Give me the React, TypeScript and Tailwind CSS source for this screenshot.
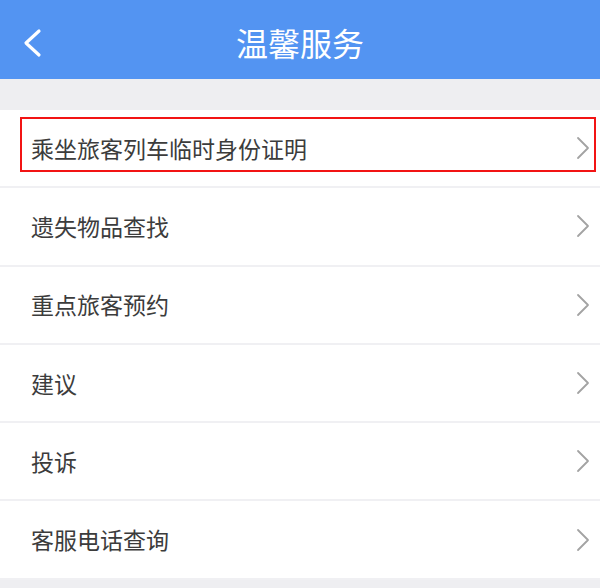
const items = [
  "乘坐旅客列车临时身份证明",
  "遗失物品查找",
  "重点旅客预约",
  "建议",
  "投诉",
  "客服电话查询",
];

function Chevron() {
  return (
    <svg width="14" height="24" viewBox="0 0 14 24" fill="none">
      <path d="M2 2 L12 12 L2 22" stroke="#a3a3a3" strokeWidth="1.8" strokeLinecap="round" strokeLinejoin="round" />
    </svg>
  );
}

export default function App() {
  return (
    <div
      className="w-[600px] h-[588px] bg-[#eeeef1] overflow-hidden"
      style={{ fontFamily: '"Noto Sans CJK SC", "Noto Sans", sans-serif' }}
    >
      <header className="relative h-[79px] bg-[#5394f2] flex items-center justify-center pt-1">
        <button className="absolute left-[20px] top-[28px] text-white">
          <svg width="24" height="30" viewBox="0 0 24 30" fill="none">
            <path d="M19 3 L6 15 L19 27" stroke="white" strokeWidth="3.2" strokeLinecap="round" strokeLinejoin="round" />
          </svg>
        </button>
        <h1 className="text-[32px] leading-none text-white">温馨服务</h1>
      </header>
      <div className="h-[31px]" />
      <ul className="bg-white">
        {items.map((label, i) => (
          <li
            key={label}
            className="relative h-[78.3px] flex items-center justify-between pl-[31px] pr-[10px] border-b-2 border-[#f0f0f3]"
          >
            <span className="text-[23px] text-[#3c3c3c]">{label}</span>
            <Chevron />
            {i === 0 && (
              <div className="absolute left-[20px] right-[4px] top-[7px] h-[55px] border-[2.5px] border-[#f21414] pointer-events-none" />
            )}
          </li>
        ))}
      </ul>
    </div>
  );
}
